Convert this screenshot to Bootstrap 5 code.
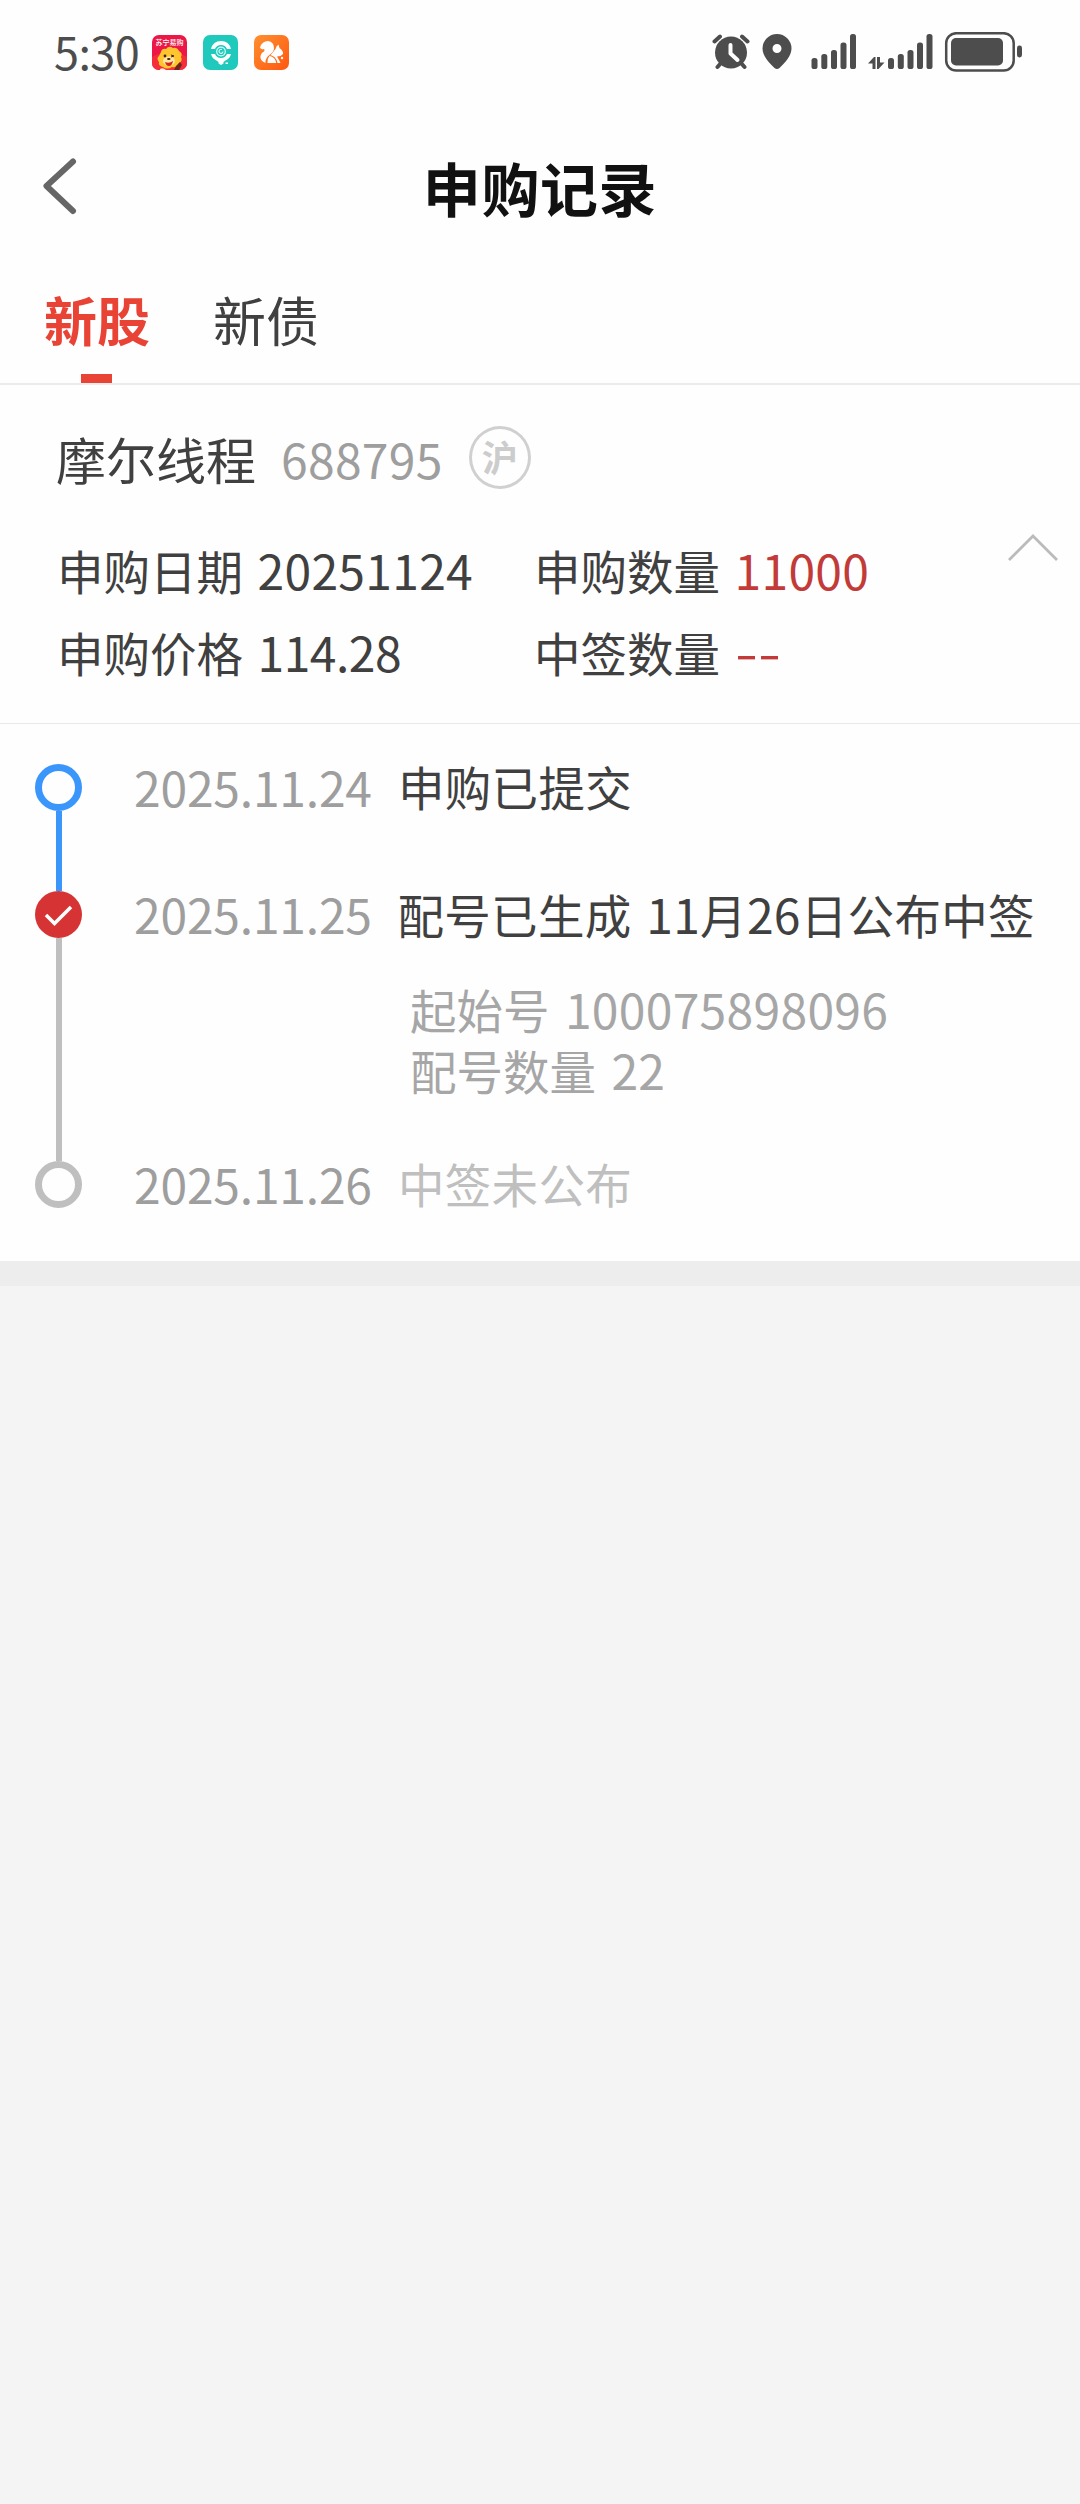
<!DOCTYPE html>
<html lang="zh-CN">
<head>
<meta charset="utf-8">
<meta name="viewport" content="width=device-width, initial-scale=1">
<title>申购记录</title>
<link href="https://cdn.jsdelivr.net/npm/bootstrap@5.3.0/dist/css/bootstrap.min.css" rel="stylesheet">
<style>
  body { background: #f4f4f4; color: #404040; font-family: "Noto Sans CJK SC", sans-serif; font-size: 46.5px; line-height: 1; }
  svg { display: block; flex: none; }
  .screen { width: 1080px; min-height: 2504px; }
  .sheet { background: #fefefe; height: 1261px; }
  .status { height: 104px; padding-left: 54px; padding-right: 58px; color: #4d4d4d; }
  .clock { font-size: 45px; font-weight: 400; width: 98px; line-height: 100px; height: 102px; letter-spacing: -.6px; }
  .apps { gap: 16px; }
  .topbar { height: 168px; }
  .topbar h1 { font-size: 58px; font-weight: 700; color: #111; line-height: 166px; letter-spacing: .6px; }
  .back { left: 40px; top: 51px; }
  .tabs { height: 113px; border-bottom: 2px solid #ececec; padding-left: 44px; gap: 63px; font-size: 53px; }
  .tabs a { color: #404040; text-decoration: none; line-height: 94px; width: 106px; height: 111px; }
  .tabs a.current { color: #e84335; font-weight: 700; }
  .bar { width: 31px; height: 9px; background: #e84335; left: 37px; bottom: 0; }
  .stock { height: 339px; padding-top: 41px; padding-left: 56px; border-bottom: 1px solid #e9e9e9; }
  .stock-name { font-size: 50px; height: 63px; }
  .num { font-size: 48px; letter-spacing: .3px; }
  .code { color: #9e9e9e; margin-left: 25px; }
  .market { width: 62px; height: 63px; border: 3px solid #d0d0d0; color: #ccc; font-size: 36px; font-weight: 700; margin-left: 26px; line-height: 55px; }
  .facts { margin-top: 39px; padding-left: 1px; }
  .facts > div > div { height: 82px; line-height: 82px; white-space: nowrap; }
  .facts .num { margin-left: 14.5px; }
  .facts .price { letter-spacing: -.5px; }
  .facts .dashes { display: inline-block; letter-spacing: 0; transform: translateY(-1px) scaleX(1.38); transform-origin: 0 50%; }
  .col-a { width: 477px; }
  .red { color: #c23b39; }
  .fold { right: 22px; top: 149px; }
  .steps { padding: 40px 0 0 35px; }
  .step-one { height: 127px; }
  .step-two { height: 270px; }
  .rail { width: 47px; }
  .dot { width: 47px; height: 47px; border: 7px solid; flex: none; }
  .wire { width: 6px; }
  .blue-ring { border-color: #3b96fb; }
  .gray-ring { border-color: #bfbfbf; }
  .blue-wire { background: #3b96fb; }
  .gray-wire { background: #bfbfbf; }
  .date { width: 264px; margin-left: 52px; color: #9e9e9e; letter-spacing: -.2px; }
  .step-line { line-height: 44px; white-space: nowrap; height: 45px; }
  .step-title { letter-spacing: .3px; }
  .gap-space { word-spacing: 4px; margin-left: -.5px; }
  .detail { color: #a6a6a6; line-height: 61px; padding: 42px 0 0 12px; white-space: nowrap; word-spacing: 5px; }
  .pending { color: #bfbfbf; }
  .band { height: 25px; background: #ededed; }
</style>
</head>
<body>
<div class="screen">
  <div class="sheet">
    <header class="status d-flex align-items-center justify-content-between">
      <div class="d-flex align-items-center">
        <span class="clock">5:30</span>
        <div class="apps d-flex">
          <svg width="35" height="35" viewBox="0 0 35 35">
            <rect width="35" height="35" rx="7" fill="#ec1747"/>
            <path d="M0 22Q17 12 35 22V28a7 7 0 0 1-7 7H7a7 7 0 0 1-7-7Z" fill="#f52c3a"/>
            <text x="17.5" y="9.6" text-anchor="middle" font-size="7" font-weight="500" fill="#fff" font-family="Noto Sans CJK SC, sans-serif">苏宁易购</text>
            <path d="M9 17q1-4 5-3q3-4 7-1q4-1 6 3q4 2 2 6q2 4-2 6q-2 5-7 4q-5 3-9 0q-5-1-4-5q-3-4 0-6Z" fill="#ffc52e"/>
            <ellipse cx="17" cy="26" rx="6" ry="4.6" fill="#ffe7a3"/>
            <circle cx="13" cy="21" r="1.4" fill="#41200e"/><path d="m19 20 3 1-3 1" stroke="#41200e" fill="none"/>
            <ellipse cx="16.8" cy="24" rx="1.8" ry="1.1" fill="#41200e"/><path d="M13 27q4 2 8-1q-1 5-4 5t-4-4Z" fill="#d42120"/>
            <path d="m24 31 4-4 2 3-3 5h-5Z" fill="#6c271a"/><path d="M8 34q3-2 6 1H8Z" fill="#ffe9d6"/>
          </svg>
          <svg width="35" height="35" viewBox="0 0 35 35">
            <rect width="35" height="35" rx="7" fill="#1fcabc"/>
            <path d="M8 14Q10 6 18 6t10 8h-4a6.500 6.500 0 0 0-12 0ZM8 19h4a6.500 6.500 0 0 0 12 0h4q-1 4.500-5.500 6.500L20.500 27v1.500L18 30l-2.500-1.500V27l-2-1.500Q9 23.500 8 19Z" fill="#fff"/>
            <circle cx="18" cy="16.500" r="4.300" fill="none" stroke="#d9fffb" stroke-width="1.200"/>
            <path d="M20 16.500a2 2 0 1 1-1-1.900" fill="none" stroke="#d9fffb" stroke-width="1.200"/>
            <rect x="22.500" y="27.500" width="2.500" height="1.500" fill="#fff"/>
          </svg>
          <svg width="35" height="35" viewBox="0 0 35 35">
            <defs><linearGradient id="sq" x1="0" y1="0" x2="1" y2="1"><stop offset="0" stop-color="#ff9030"/><stop offset="1" stop-color="#ff5710"/></linearGradient></defs>
            <rect width="35" height="35" rx="7" fill="url(#sq)"/>
            <path d="M11.500 28C6 26 5 21 8.500 17.500q3-1.500 1.500-3.500-3 1-4-1.500Q8 6 14 6q6 1 6 7 0 3.500-4 6.500-5 3.500-4.500 8.500Z" fill="#fff"/>
            <path d="M13.500 28q-.5-5.500 4-9l4-5q.5-3 3-4.500l1 3.500q4 3 3.500 6-2 2.500-6 2.500l2 3.500 1.500 3H14Z" fill="#fff"/>
            <path d="M16 20.500q5.500 1 7 7.500" fill="none" stroke="#ff6c1a" stroke-width="1.200"/><circle cx="28" cy="23" r="1.200" fill="#fff"/>
          </svg>
        </div>
      </div>
      <svg width="310" height="40" viewBox="712 32 310 40" fill="#4d4d4d">
        <circle cx="731" cy="52.500" r="16"/>
        <path d="m714.500 41.500 5.500-5M747.500 41.500l-5.500-5M721 63l-3.500 4M741 63l3.500 4" stroke="#4d4d4d" stroke-width="4" stroke-linecap="round"/>
        <path d="M730.500 45v8.500l7 6.500" fill="none" stroke="#fefefe" stroke-width="4" stroke-linecap="round" stroke-linejoin="round"/>
        <path fill-rule="evenodd" d="M777 34a14.500 14.500 0 0 1 14.500 14.500c0 7-6 14-12 19.500q-2.500 2-5 0c-6-5.500-12-12.500-12-19.500A14.500 14.500 0 0 1 777 34Zm0 10a4.500 4.500 0 1 0 0 9 4.500 4.500 0 0 0 0-9Z"/>
        <g id="bars"><rect x="811.500" y="58" width="6" height="11" rx="2.600"/><rect x="821.300" y="54" width="6" height="15" rx="2.600"/><rect x="831" y="50" width="6" height="19" rx="2.600"/><rect x="840.500" y="42.500" width="6" height="26.500" rx="2.600"/><rect x="850" y="34" width="6" height="35" rx="2.600"/></g>
        <use href="#bars" x="76.500"/>
        <path d="M868 63.500l6-6.500h1.500v12h-3v-5.500ZM877 57h3v5.500h4.500l-6 6.500H877Z"/>
        <rect x="946.200" y="33.200" width="67.500" height="37.300" rx="10" fill="none" stroke="#4d4d4d" stroke-width="2.500"/>
        <rect x="951" y="38" width="52" height="27.500" rx="5"/>
        <rect x="1017" y="45.500" width="5" height="12" rx="2.400"/>
      </svg>
    </header>

    <nav class="topbar position-relative text-center">
      <svg class="back position-absolute" width="40" height="62" viewBox="40 155 40 62"><path d="M73 161.500 46.500 186 73 211" fill="none" stroke="#666" stroke-width="6" stroke-linecap="round" stroke-linejoin="round"/></svg>
      <h1 class="m-0">申购记录</h1>
    </nav>

    <nav class="tabs d-flex">
      <a class="current position-relative" href="#">新股<span class="bar position-absolute"></span></a>
      <a href="#">新债</a>
    </nav>

    <section class="stock position-relative">
      <div class="stock-name d-flex align-items-center">
        <span>摩尔线程</span>
        <span class="num code">688795</span>
        <span class="market rounded-circle text-center">沪</span>
      </div>
      <div class="facts d-flex">
        <div class="col-a">
          <div>申购日期<span class="num">20251124</span></div>
          <div>申购价格<span class="num price">114.28</span></div>
        </div>
        <div>
          <div>申购数量<span class="num red">11000</span></div>
          <div>中签数量<span class="num red dashes">--</span></div>
        </div>
      </div>
      <svg class="fold position-absolute" width="50" height="28" viewBox="0 0 50 28"><path d="M1 26 25 2l24 24" fill="none" stroke="#bbb" stroke-width="2.800"/></svg>
    </section>

    <section class="steps">
      <div class="step-one d-flex">
        <div class="rail d-flex flex-column align-items-center"><span class="dot blue-ring rounded-circle"></span><span class="wire blue-wire flex-grow-1"></span></div>
        <div class="step-line num date">2025.11.24</div>
        <div class="step-line step-title">申购已提交</div>
      </div>
      <div class="step-two d-flex">
        <div class="rail d-flex flex-column align-items-center">
          <svg width="47" height="47" viewBox="0 0 47 47"><circle cx="23.500" cy="23.500" r="23.500" fill="#d63434"/><path d="m11 24 8.500 8.500L36 16" fill="none" stroke="#fff" stroke-width="3.500"/></svg>
          <span class="wire gray-wire flex-grow-1"></span>
        </div>
        <div class="step-line num date">2025.11.25</div>
        <div>
          <div class="step-line step-title gap-space">配号已生成 <span class="num">11</span>月<span class="num">26</span>日公布中签</div>
          <div class="detail"><div>起始号 <span class="num">100075898096</span></div><div>配号数量 <span class="num">22</span></div></div>
        </div>
      </div>
      <div class="d-flex">
        <div class="rail"><span class="dot gray-ring rounded-circle d-block"></span></div>
        <div class="step-line num date">2025.11.26</div>
        <div class="step-line step-title pending">中签未公布</div>
      </div>
    </section>
  </div>
  <div class="band"></div>
</div>
<script src="https://cdn.jsdelivr.net/npm/bootstrap@5.3.0/dist/js/bootstrap.bundle.min.js"></script>
</body>
</html>
